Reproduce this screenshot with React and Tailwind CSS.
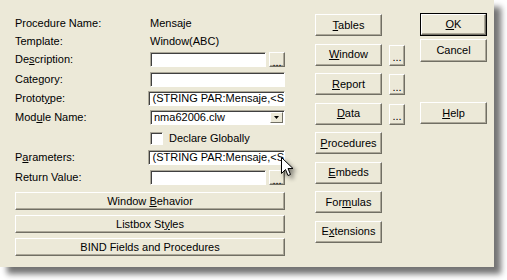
const font = "font-['Liberation_Sans',Arial,sans-serif]";

function U({ children }) {
  return <span className="underline underline-offset-[1px]">{children}</span>;
}

// classic raised button
function Btn({ children, className = '', def = false }) {
  const inner = (
    <div
      className={`flex items-center justify-center bg-[#ece9d8] border border-t-white border-l-white border-r-[#716f64] border-b-[#716f64] shadow-[inset_-1px_-1px_0_#aca899] text-[11px] text-black leading-none ${def ? 'w-full h-full' : className}`}
    >
      <span className="whitespace-pre">{children}</span>
    </div>
  );
  if (def) {
    return <div className={`border border-black ${className}`}>{inner}</div>;
  }
  return inner;
}

function Field({ children, className = '' }) {
  return (
    <div
      className={`h-[15px] bg-white border border-t-[#aca899] border-l-[#aca899] border-r-white border-b-white shadow-[inset_1px_1px_0_#404040] flex items-center pl-[3px] text-[11px] leading-none text-black overflow-hidden whitespace-nowrap ${className}`}
    >
      {children}
    </div>
  );
}

function Dots({ className = '' }) {
  return <Btn className={`w-[16px] ${className}`}><span className="inline-block mt-[5px]">...</span></Btn>;
}

function Row({ label, children, className = '' }) {
  return (
    <div className={`flex items-center ${className}`}>
      <div className="w-[135px] text-[11px] leading-none">{label}</div>
      <div className="flex-1 flex items-center gap-[3px]">{children}</div>
    </div>
  );
}

export default function App() {
  return (
    <div className={`w-[507px] h-[280px] bg-white ${font} text-black`}>
      <div className="relative w-[494px] h-[267px] bg-[#ece9d8] shadow-[7px_7px_6px_rgba(0,0,0,0.55)] flex">
        {/* left column */}
        <div className="w-[270px] ml-[15px] pt-[16px] flex flex-col">
          <Row label="Procedure Name:" className="h-[15px]">
            <span className="text-[11px] leading-none">Mensaje</span>
          </Row>
          <Row label="Template:" className="h-[15px] mt-[3px]">
            <span className="text-[11px] leading-none">Window(ABC)</span>
          </Row>
          <Row label={<>De<U>s</U>cription:</>} className="h-[15px] mt-[3px]">
            <Field className="flex-1" />
            <Dots className="h-[15px]" />
          </Row>
          <Row label="Category:" className="h-[15px] mt-[5px]">
            <Field className="flex-1" />
          </Row>
          <Row label={<>Protot<U>y</U>pe:</>} className="h-[15px] mt-[4px]">
            <Field className="flex-1">(STRING PAR:Mensaje,&lt;S</Field>
          </Row>
          <Row label={<>Mod<U>u</U>le Name:</>} className="h-[15px] mt-[4px]">
            <Field className="flex-1 justify-between pr-[1px]">
              <span>nma62006.clw</span>
              <div className="w-[13px] h-[11px] bg-[#ece9d8] border border-t-white border-l-white border-r-[#716f64] border-b-[#716f64] flex items-center justify-center">
                <svg width="5" height="3" viewBox="0 0 5 3"><path d="M0 0h5L2.5 3z" fill="#000" /></svg>
              </div>
            </Field>
          </Row>
          <Row label="" className="h-[15px] mt-[6px]">
            <div className="w-[13px] h-[13px] bg-white border border-t-[#aca899] border-l-[#aca899] border-r-white border-b-white shadow-[inset_1px_1px_0_#404040]" />
            <span className="ml-[3px] text-[11px] leading-none">Declare Globally</span>
          </Row>
          <Row label={<>P<U>a</U>rameters:</>} className="h-[15px] mt-[4px]">
            <Field className="flex-1">(STRING PAR:Mensaje,&lt;S</Field>
          </Row>
          <Row label="Return Value:" className="h-[15px] mt-[5px]">
            <Field className="flex-1" />
            <Dots className="h-[15px]" />
          </Row>
          <div className="mt-[7px] flex flex-col gap-[5px]">
            <Btn className="h-[18px] w-full">Window <U>B</U>ehavior</Btn>
            <Btn className="h-[18px] w-full">Listbox St<U>y</U>les</Btn>
            <Btn className="h-[18px] w-full">BIND Fields and Procedures</Btn>
          </div>
        </div>

        {/* middle column */}
        <div className="ml-[30px] pt-[14px] flex flex-col gap-[7.5px]">
          <Btn className="w-[67px] h-[22px]"><U>T</U>ables</Btn>
          <div className="flex gap-[7px]">
            <Btn className="w-[67px] h-[22px]"><U>W</U>indow</Btn>
            <Dots className="h-[21px] mt-[1px]" />
          </div>
          <div className="flex gap-[7px]">
            <Btn className="w-[67px] h-[22px]"><U>R</U>eport</Btn>
            <Dots className="h-[21px] mt-[1px]" />
          </div>
          <div className="flex gap-[7px]">
            <Btn className="w-[67px] h-[22px]"><U>D</U>ata</Btn>
            <Dots className="h-[21px] mt-[1px]" />
          </div>
          <Btn className="w-[67px] h-[22px]"><U>P</U>rocedures</Btn>
          <Btn className="w-[67px] h-[22px]"><U>E</U>mbeds</Btn>
          <Btn className="w-[67px] h-[22px]">For<U>m</U>ulas</Btn>
          <Btn className="w-[67px] h-[22px]">E<U>x</U>tensions</Btn>
        </div>

        {/* right column */}
        <div className="ml-auto mr-[7px] pt-[13px] flex flex-col">
          <Btn def className="w-[67px] h-[23px]"><U>O</U>K</Btn>
          <Btn className="w-[67px] h-[23px] mt-[3px]">Cancel</Btn>
          <Btn className="w-[67px] h-[22px] mt-[40px]"><U>H</U>elp</Btn>
        </div>

        {/* mouse pointer */}
        <svg
          className="absolute left-[281px] top-[157px] drop-shadow-[3px_3px_2px_rgba(0,0,0,0.45)]"
          width="13"
          height="21"
          viewBox="0 0 13 21"
        >
          <path
            d="M0.5 0.5 L0.5 16.5 L4.5 12.5 L7 18.5 L9.5 17.5 L7 11.5 L12 11.5 Z"
            fill="#fff"
            stroke="#000"
            strokeWidth="1"
            strokeLinejoin="miter"
          />
        </svg>
      </div>
    </div>
  );
}
